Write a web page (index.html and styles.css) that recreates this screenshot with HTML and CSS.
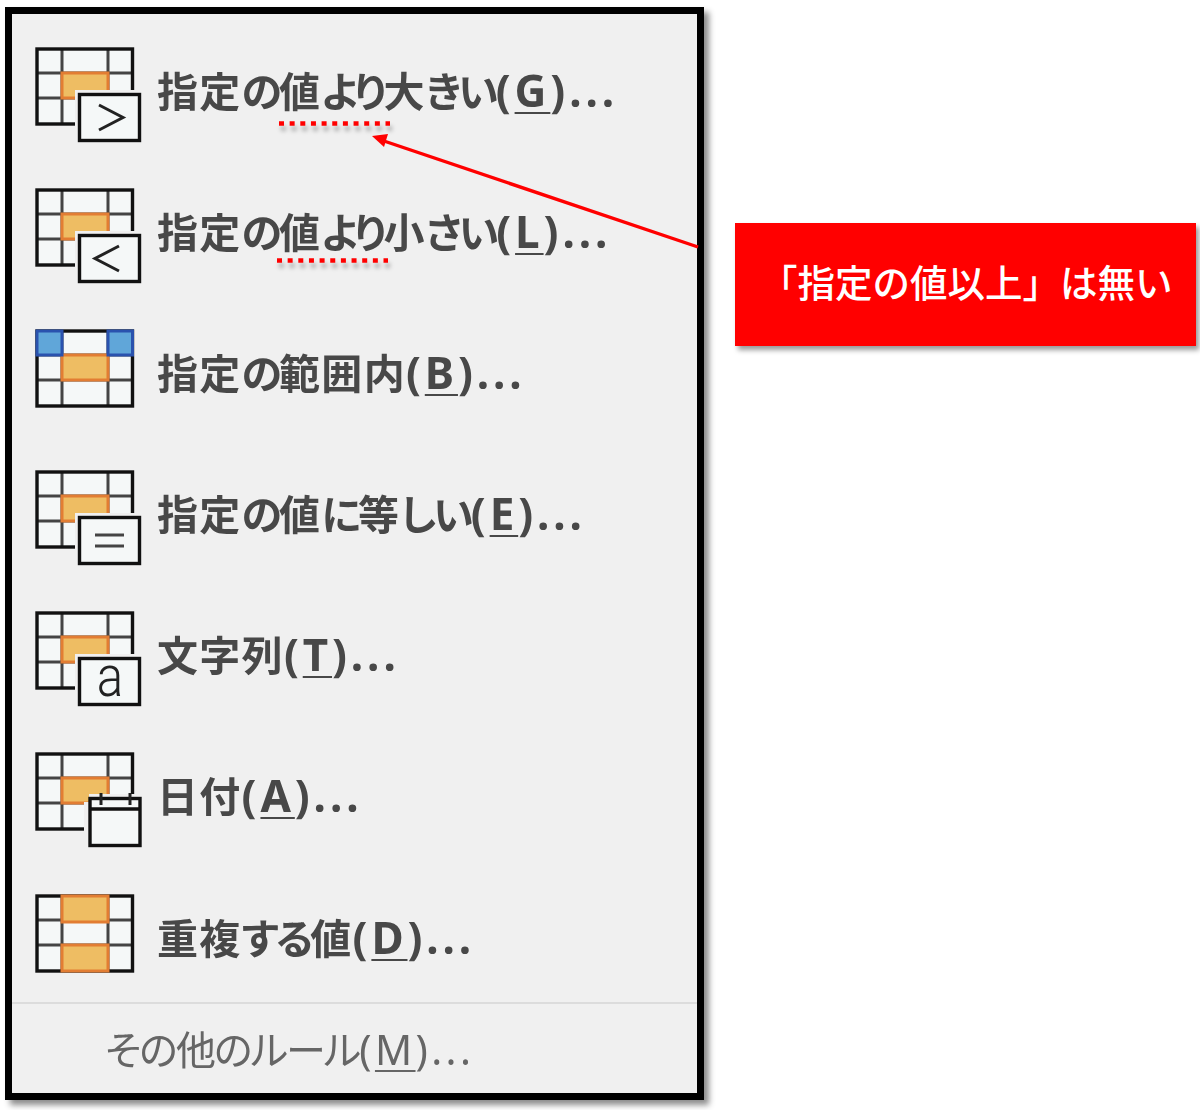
FILE: index.html
```html
<!DOCTYPE html>
<html lang="ja">
<head>
<meta charset="utf-8">
<title>条件付き書式</title>
<link rel="stylesheet" href="styles.css">
</head>
<body>
<svg class="defs" width="0" height="0" aria-hidden="true">
  <defs>
    <g id="grid">
      <rect class="cell" x="2" y="2" width="95.5" height="75"/>
      <path class="inner" d="M27 2V77M73 2V77M2 26H97M2 51H97"/>
      <rect class="outer" x="2" y="2" width="95.5" height="75"/>
    </g>
    <g id="table">
      <use href="#grid"/>
      <rect class="hot" x="27" y="26" width="46" height="25"/>
    </g>
    <g id="badge">
      <rect class="halo" x="40" y="43" width="66" height="52"/>
      <rect class="cell outer" x="44.5" y="47.5" width="60" height="46"/>
    </g>
  </defs>
</svg>
<main class="menu">
  <ul class="items">
    <li class="item">
      <svg class="icon" viewBox="0 0 106 95"><use href="#table"/><use href="#badge"/><path class="glyph" d="M64 58L88 70.5L64 83"/></svg>
      <span class="label">指定<span class="kana">の</span>値<span class="kana">より</span>大<span class="kana">きい</span><span class="key">(<u>G</u>)...</span></span>
    </li>
    <li class="item">
      <svg class="icon" viewBox="0 0 106 95"><use href="#table"/><use href="#badge"/><path class="glyph" d="M84 58L60 70.5L84 83"/></svg>
      <span class="label">指定<span class="kana">の</span>値<span class="kana">より</span>小<span class="kana">さい</span><span class="key">(<u>L</u>)...</span></span>
    </li>
    <li class="item">
      <svg class="icon" viewBox="0 0 106 95"><use href="#table"/><rect class="cold" x="2" y="2" width="25" height="24"/><rect class="cold" x="73" y="2" width="24.5" height="24"/></svg>
      <span class="label">指定<span class="kana">の</span>範囲内<span class="key">(<u>B</u>)...</span></span>
    </li>
    <li class="item">
      <svg class="icon" viewBox="0 0 106 95"><use href="#table"/><use href="#badge"/><path class="bars" d="M60 65H89M60 76H89"/></svg>
      <span class="label">指定<span class="kana">の</span>値<span class="kana">に</span>等<span class="kana">しい</span><span class="key">(<u>E</u>)...</span></span>
    </li>
    <li class="item">
      <svg class="icon" viewBox="0 0 106 95"><use href="#table"/><use href="#badge"/><text class="letter" transform="translate(75 84.5) scale(.85 1)" text-anchor="middle">a</text></svg>
      <span class="label">文字列<span class="key">(<u>T</u>)...</span></span>
    </li>
    <li class="item">
      <svg class="icon" viewBox="0 0 106 95"><use href="#table"/><path class="halo" d="M49 92V50H54V42H106V95H49Z"/><rect class="cell outer" x="55" y="46.5" width="50" height="47"/><path class="outer" d="M55 57H105"/><path class="bars ring" d="M66 41V53M95 41V53"/></svg>
      <span class="label">日付<span class="key">(<u>A</u>)...</span></span>
    </li>
    <li class="item">
      <svg class="icon" viewBox="0 0 106 95"><use href="#grid"/><rect class="hot" x="27" y="2" width="46" height="26"/><rect class="hot" x="27" y="51" width="46" height="26"/></svg>
      <span class="label">重複<span class="kana">する</span>値<span class="key">(<u>D</u>)...</span></span>
    </li>
  </ul>
  <div class="more">その他のルール<span class="key">(<u>M</u>)...</span></div>
</main>
<aside class="callout">「指定の値以上」は無い</aside>
<svg class="notes" viewBox="0 0 1200 1110" aria-hidden="true">
  <path class="dots" d="M279 123.5H390"/>
  <path class="dots" d="M277 260.5H388"/>
  <path class="arrow-line" d="M698 247L384 141"/>
  <path class="arrow-head" d="M372 136L388 134L384 147Z"/>
</svg>
</body>
</html>
```
FILE: styles.css
```css
html, body {
  margin: 0;
  background: #fff;
}
body {
  position: relative;
  display: flex;
  align-items: flex-start;
  width: 1200px;
  height: 1110px;
  padding: 7px 0 0 5px;
  box-sizing: border-box;
  overflow: hidden;
  font-family: "Noto Sans", "Noto Sans CJK JP", sans-serif;
}
.defs {
  position: absolute;
}
.menu {
  flex: none;
  width: 699px;
  height: 1093px;
  box-sizing: border-box;
  border: 7px solid #000;
  background: #f0f0f0;
  box-shadow: 5px 5px 6px rgba(0, 0, 0, .45);
  padding-top: 30px;
}
.items {
  list-style: none;
  margin: 0;
  padding: 0 0 11px;
  display: flex;
  flex-direction: column;
  gap: 41.2px;
  border-bottom: 2px solid #dcdcdc;
}
.item {
  height: 100px;
  display: flex;
  align-items: center;
  gap: 16px;
  padding-left: 23px;
}
.icon {
  flex: none;
  width: 106px;
  height: 95px;
  overflow: visible;
}
.label {
  font-size: 41px;
  font-weight: 700;
  font-feature-settings: "palt";
  letter-spacing: 1.3px;
  line-height: 48px;
  color: #484848;
  white-space: nowrap;
  margin-bottom: 8px;
  filter: blur(.4px);
}
.kana {
  letter-spacing: -3px;
}
.key {
  font-size: 44px;
  letter-spacing: 3.9px;
}
.label u, .more u {
  text-underline-offset: 5px;
  text-decoration-thickness: 2px;
}
.more {
  font-size: 40px;
  font-weight: 400;
  font-feature-settings: "palt";
  letter-spacing: -1.9px;
  line-height: 48px;
  color: #666;
  padding: 21px 0 0 93px;
  white-space: nowrap;
  filter: blur(.4px);
}
.more .key {
  font-size: 41px;
  letter-spacing: 3.4px;
}
.callout {
  flex: none;
  width: 461px;
  height: 123px;
  margin: 216px 0 0 31px;
  box-sizing: border-box;
  padding: 0 0 8px 25px;
  display: flex;
  align-items: center;
  background: #f00;
  color: #fff;
  font-size: 37.5px;
  font-weight: 500;
  white-space: nowrap;
  box-shadow: 3px 4px 5px rgba(0, 0, 0, .4);
}
.cell {
  fill: #f5f8f8;
}
.inner {
  fill: none;
  stroke: #444;
  stroke-width: 3;
}
.outer {
  fill: none;
  stroke: #111;
  stroke-width: 3.4;
}
.cell.outer {
  fill: #f5f8f8;
}
.hot {
  fill: #eebd63;
  stroke: #e27d33;
  stroke-width: 3;
}
.cold {
  fill: #60a6d9;
  stroke: #2a52ae;
  stroke-width: 3;
}
.halo {
  fill: #f0f0f0;
}
.glyph {
  fill: none;
  stroke: #222;
  stroke-width: 3;
}
.bars {
  fill: none;
  stroke: #444;
  stroke-width: 3;
}
.ring {
  stroke: #222;
}
.letter {
  font-family: Roboto, sans-serif;
  font-weight: 300;
  font-size: 58px;
  fill: #222;
}
.notes {
  position: absolute;
  left: 0;
  top: 0;
  width: 1200px;
  height: 1110px;
  pointer-events: none;
}
.dots {
  fill: none;
  stroke: #f00;
  stroke-width: 4.5;
  stroke-dasharray: 5 5.65;
  filter: drop-shadow(2px 5px 2px rgba(0, 0, 0, .3));
}
.arrow-line {
  fill: none;
  stroke: #f00;
  stroke-width: 3.4;
}
.arrow-head {
  fill: #f00;
}
```
